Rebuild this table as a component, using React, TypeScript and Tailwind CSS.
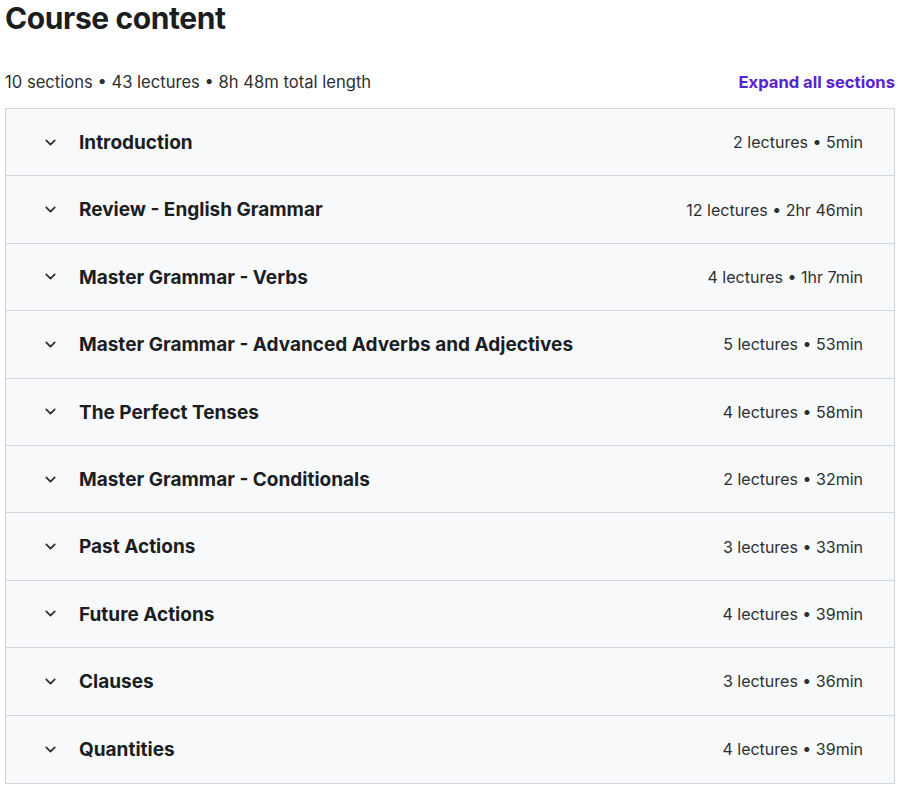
import { ChevronDown } from "lucide-react";

const sections = [
  { title: "Introduction", meta: "2 lectures • 5min" },
  { title: "Review - English Grammar", meta: "12 lectures • 2hr 46min" },
  { title: "Master Grammar - Verbs", meta: "4 lectures • 1hr 7min" },
  { title: "Master Grammar - Advanced Adverbs and Adjectives", meta: "5 lectures • 53min" },
  { title: "The Perfect Tenses", meta: "4 lectures • 58min" },
  { title: "Master Grammar - Conditionals", meta: "2 lectures • 32min" },
  { title: "Past Actions", meta: "3 lectures • 33min" },
  { title: "Future Actions", meta: "4 lectures • 39min" },
  { title: "Clauses", meta: "3 lectures • 36min" },
  { title: "Quantities", meta: "4 lectures • 39min" },
];

const App = () => {
  return (
    <div className="min-h-screen bg-white text-[#2d2f31] font-['Inter',sans-serif]">
      <div className="px-[5px] w-[900px]">
        <h1 className="text-[30px] font-bold leading-[36px] tracking-[-0.4px] text-[#1c1d1f]">Course content</h1>

        <div className="flex items-center justify-between mt-[28px] h-[36px]">
          <span className="text-[16.6px] text-[#2d2f31]">10 sections • 43 lectures • 8h 48m total length</span>
          <button className="text-[16.6px] font-bold text-[#5624d0]">Expand all sections</button>
        </div>

        {/* Section list */}
        <div className="mt-[8px] border border-[#d1d7dc]">
          {sections.map((s, i) => (
            <div
              key={s.title}
              className={`flex items-center justify-between h-[67.4px] bg-[#f7f9fa] pl-[36px] pr-[31px] ${
                i < sections.length - 1 ? "border-b border-[#d1d7dc]" : ""
              }`}
            >
              <div className="flex items-center gap-[20px]">
                <ChevronDown className="w-[17px] h-[17px] text-[#2d2f31]" strokeWidth={2.5} />
                <span className="text-[19px] font-bold text-[#1c1d1f] pt-[2px]">{s.title}</span>
              </div>
              <span className="text-[16px] text-[#2d2f31]">{s.meta}</span>
            </div>
          ))}
        </div>
      </div>
    </div>
  );
};

export default App;
